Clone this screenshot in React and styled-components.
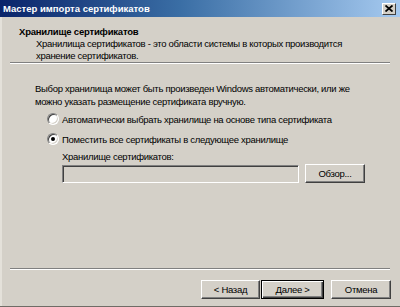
import styled, { createGlobalStyle } from "styled-components";

const GlobalStyle = createGlobalStyle`
  html, body {
    margin: 0;
    padding: 0;
    background: #d4d0c8;
  }
  body {
    font-family: "Liberation Sans", Arial, sans-serif;
    font-size: 9.5px;
    letter-spacing: -0.3px;
    color: #000;
    white-space: nowrap;
  }
`;

// Окно мастера
const Window = styled.div`
  width: 400px;
  height: 307px;
  box-sizing: border-box;
  display: flex;
  flex-direction: column;
  background: #d4d0c8;
  border-bottom: 1px solid #6f6c66;
  box-shadow: inset 2px 0 0 #e4e1da;
`;

const TitleBar = styled.div`
  height: 17px;
  flex: none;
  display: flex;
  align-items: center;
  justify-content: space-between;
  padding: 0 4px 0 3px;
  background: linear-gradient(to right, #0a246a 0%, #3a6ea5 45%, #a6caf0 100%);
`;

const TitleText = styled.span`
  color: #fff;
  font-weight: bold;
  font-size: 9.5px;
  letter-spacing: 0;
`;

const CloseButton = styled.div`
  width: 14px;
  height: 12px;
  box-sizing: border-box;
  display: flex;
  align-items: center;
  justify-content: center;
  background: #d4d0c8;
  border-top: 1px solid #fff;
  border-left: 1px solid #fff;
  border-right: 1px solid #404040;
  border-bottom: 1px solid #404040;
`;

const Header = styled.div`
  padding: 9px 0 0 19px;
  line-height: 12px;
`;

const HeaderTitle = styled.div`
  font-weight: bold;
  font-size: 9.5px;
  letter-spacing: -0.2px;
`;

const HeaderText = styled.div`
  padding-left: 17px;
`;

const Separator = styled.div`
  margin: 0 10px;
  height: 0;
  border-top: 1px solid #808080;
  border-bottom: 1px solid #fff;
`;

const Body = styled.div`
  flex: 1;
  padding: 18px 0 0 35px;
  line-height: 13px;
`;

const Paragraph = styled.div``;

const RadioRow = styled.label`
  display: flex;
  align-items: center;
  height: 14px;
  margin: ${(p) => p.$top}px 0 0 12px;
  column-gap: 3px;
`;

const RadioCircle = styled.span`
  width: 12px;
  height: 12px;
  box-sizing: border-box;
  border-radius: 50%;
  background: #fff;
  border: 1px solid;
  border-color: #808080 #fff #fff #808080;
  box-shadow: inset 1px 1px 0 #404040, inset -1px -1px 0 #d4d0c8;
  display: flex;
  align-items: center;
  justify-content: center;
  &::after {
    content: "";
    display: ${(p) => (p.$checked ? "block" : "none")};
    width: 4px;
    height: 4px;
    border-radius: 50%;
    background: #000;
  }
`;

const StoreBlock = styled.div`
  margin: 4px 0 0 27px;
`;

const StoreRow = styled.div`
  display: flex;
  align-items: flex-end;
  column-gap: 6px;
  margin-top: 1px;
`;

const StoreInput = styled.div`
  width: 237px;
  height: 18px;
  box-sizing: border-box;
  background: #d4d0c8;
  border: 1px solid;
  border-color: #808080 #fff #fff #808080;
  box-shadow: inset 1px 1px 0 #404040, inset -1px -1px 0 #d4d0c8;
`;

const Button = styled.div`
  width: ${(p) => p.$w || 60}px;
  height: 19px;
  box-sizing: border-box;
  display: flex;
  align-items: center;
  justify-content: center;
  background: #d4d0c8;
  border: 1px solid;
  border-color: ${(p) => (p.$default ? "#000" : "#fff #404040 #404040 #fff")};
  box-shadow: ${(p) =>
    p.$default
      ? "inset 1px 1px 0 #fff, inset -1px -1px 0 #404040, inset -2px -2px 0 #808080"
      : "inset -1px -1px 0 #808080"};
  margin-left: ${(p) => p.$gap || 0}px;
`;

const Footer = styled.div`
  flex: none;
  display: flex;
  justify-content: flex-end;
  padding: 10px 9px 7px 0;
`;

function CloseIcon() {
  return (
    <svg width="8" height="7" viewBox="0 0 8 7">
      <path d="M0.5 0.5 L7.5 6.5 M7.5 0.5 L0.5 6.5" stroke="#000" strokeWidth="1.8" />
    </svg>
  );
}

export default function App() {
  return (
    <>
      <GlobalStyle />
      <Window>
        <TitleBar>
          <TitleText>Мастер импорта сертификатов</TitleText>
          <CloseButton>
            <CloseIcon />
          </CloseButton>
        </TitleBar>
        <Header>
          <HeaderTitle>Хранилище сертификатов</HeaderTitle>
          <HeaderText>
            Хранилища сертификатов - это области системы в которых производится
            <br />
            хранение сертификатов.
          </HeaderText>
        </Header>
        <Separator />
        <Body>
          <Paragraph>
            Выбор хранилища может быть произведен Windows автоматически, или же
            <br />
            можно указать размещение сертификата вручную.
          </Paragraph>
          <RadioRow $top={4}>
            <RadioCircle />
            Автоматически выбрать хранилище на основе типа сертификата
          </RadioRow>
          <RadioRow $top={6}>
            <RadioCircle $checked />
            Поместить все сертификаты в следующее хранилище
          </RadioRow>
          <StoreBlock>
            <div>Хранилище сертификатов:</div>
            <StoreRow>
              <StoreInput />
              <Button>Обзор...</Button>
            </StoreRow>
          </StoreBlock>
        </Body>
        <Separator />
        <Footer>
          <Button $w={59}>&lt; Назад</Button>
          <Button $w={63} $gap={1} $default>
            Далее &gt;
          </Button>
          <Button $w={60} $gap={7}>
            Отмена
          </Button>
        </Footer>
      </Window>
    </>
  );
}
